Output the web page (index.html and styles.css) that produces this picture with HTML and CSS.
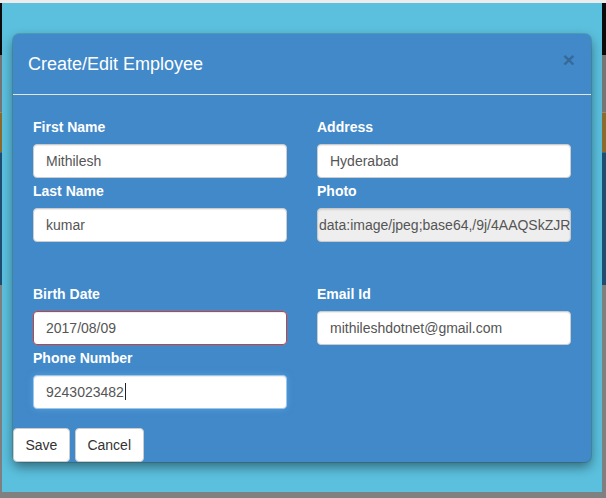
FILE: index.html
```html
<!DOCTYPE html>
<html>
<head>
<meta charset="utf-8">
<link rel="stylesheet" href="styles.css">
</head>
<body>
<div class="screen">
  <div class="topbar"></div>
  <div class="stage">
    <div class="strip">
      <div class="band b-black"></div>
      <div class="band b-gray"></div>
      <div class="band b-orange"></div>
      <div class="band b-navy"></div>
      <div class="band b-rest"></div>
    </div>
    <div class="backdrop">
      <div class="modal">
        <div class="modal-header">
          <h4 class="modal-title">Create/Edit Employee</h4>
          <span class="close">×</span>
        </div>
        <div class="modal-body">
          <div class="row row-a">
            <div class="col">
              <div class="field">
                <label class="lbl">First Name</label>
                <div class="input">Mithilesh</div>
              </div>
              <div class="field">
                <label class="lbl">Last Name</label>
                <div class="input">kumar</div>
              </div>
            </div>
            <div class="col">
              <div class="field">
                <label class="lbl">Address</label>
                <div class="input">Hyderabad</div>
              </div>
              <div class="field">
                <label class="lbl">Photo</label>
                <div class="input input-photo"><span class="photo-text">data:image/jpeg;base64,/9j/4AAQSkZJRgABAQAAAQABAAD</span></div>
              </div>
            </div>
          </div>
          <div class="row row-b">
            <div class="col">
              <div class="field">
                <label class="lbl">Birth Date</label>
                <div class="input input-error">2017/08/09</div>
              </div>
              <div class="field">
                <label class="lbl">Phone Number</label>
                <div class="input input-focus">9243023482<span class="caret"></span></div>
              </div>
            </div>
            <div class="col">
              <div class="field">
                <label class="lbl">Email Id</label>
                <div class="input">mithileshdotnet@gmail.com</div>
              </div>
            </div>
          </div>
        </div>
        <div class="modal-footer">
          <button class="btn">Save</button>
          <button class="btn">Cancel</button>
        </div>
      </div>
    </div>
    <div class="strip strip-right">
      <div class="band b-black"></div>
      <div class="band b-gray"></div>
      <div class="band b-orange"></div>
      <div class="band b-navy"></div>
      <div class="band b-rest"></div>
    </div>
  </div>
  <div class="bottombar"></div>
</div>
</body>
</html>
```

FILE: styles.css
```css
* { box-sizing: border-box; }

html, body {
  margin: 0;
  padding: 0;
}

body {
  background: #808080;
  font-family: "Liberation Sans", Arial, sans-serif;
  font-size: 14px;
  line-height: 20px;
  color: #333;
}

.screen {
  width: 606px;
  height: 498px;
  display: flex;
  flex-direction: column;
  overflow: hidden;
}

.topbar {
  height: 3px;
  background: #ececec;
}

.stage {
  display: flex;
  height: 489px;
}

.strip {
  width: 2px;
  display: flex;
  flex-direction: column;
}

.strip-right {
  width: 4px;
}

.band { flex: none; }
.b-black { height: 52px; background: #0b0b0b; }
.b-gray { height: 58px; background: #757575; border-bottom: 1px solid #8a8a8a; }
.b-orange { height: 39px; background: #8c6a2c; }
.b-navy { height: 133px; background: #1f4c70; border-top: 1px solid #3a6a8e; }
.b-rest { flex: 1; background: #7f7f7f; }

.backdrop {
  width: 600px;
  background: #5bc0de;
  padding: 31px 0 0 11px;
}

.modal {
  width: 578px;
  height: 428px;
  background: #4189c9;
  border-radius: 6px;
  box-shadow: 0 0 0 1px rgba(0, 0, 0, 0.12), 0 5px 12px rgba(0, 0, 0, 0.45);
  display: flex;
  flex-direction: column;
}

.modal-header {
  display: flex;
  justify-content: space-between;
  align-items: flex-start;
  padding: 17px 16px 16px 15px;
  border-bottom: 1px solid #e5e5e5;
}

.modal-title {
  margin: 0;
  font-size: 18px;
  font-weight: normal;
  line-height: 27px;
  color: #fff;
}

.close {
  font-size: 21px;
  font-weight: bold;
  line-height: 21px;
  margin-top: -2px;
  color: #35699a;
}

.modal-body {
  padding: 22px 20px 0 20px;
  flex: 1;
}

.row {
  display: grid;
  grid-template-columns: 254px 254px;
  column-gap: 30px;
  align-items: start;
}

.row-a {
  margin-bottom: 39px;
}

.field {
  margin-bottom: 3px;
}

.lbl {
  display: block;
  font-weight: bold;
  color: #fff;
  line-height: 20px;
  margin-bottom: 7px;
}

.input {
  height: 34px;
  padding: 6px 12px;
  background: #fff;
  border: 1px solid #ccc;
  border-radius: 4px;
  box-shadow: inset 0 1px 1px rgba(0, 0, 0, 0.075);
  color: #555;
  font-size: 14px;
  line-height: 20px;
  white-space: nowrap;
  overflow: hidden;
}

.input-photo {
  background: #eee;
  padding-left: 1px;
  padding-right: 0;
  border-color: #c8c8c8;
  box-shadow: inset 0 1px 2px rgba(0, 0, 0, 0.12);
}

.input-error {
  border-color: #c9403c;
}

.input-focus {
  border-color: #9cc6ea;
  box-shadow: inset 0 1px 1px rgba(0, 0, 0, 0.075), 0 0 6px rgba(102, 175, 233, 0.6);
}

.caret {
  display: inline-block;
  width: 1px;
  height: 17px;
  background: #222;
  vertical-align: -3px;
  margin-left: 1px;
}

.modal-footer {
  display: flex;
  gap: 5px;
}

.btn {
  height: 34px;
  padding: 6px 11.5px;
  font-family: "Liberation Sans", Arial, sans-serif;
  font-size: 14px;
  line-height: 20px;
  color: #333;
  background: #fff;
  border: 1px solid #ccc;
  border-radius: 4px;
}
```
